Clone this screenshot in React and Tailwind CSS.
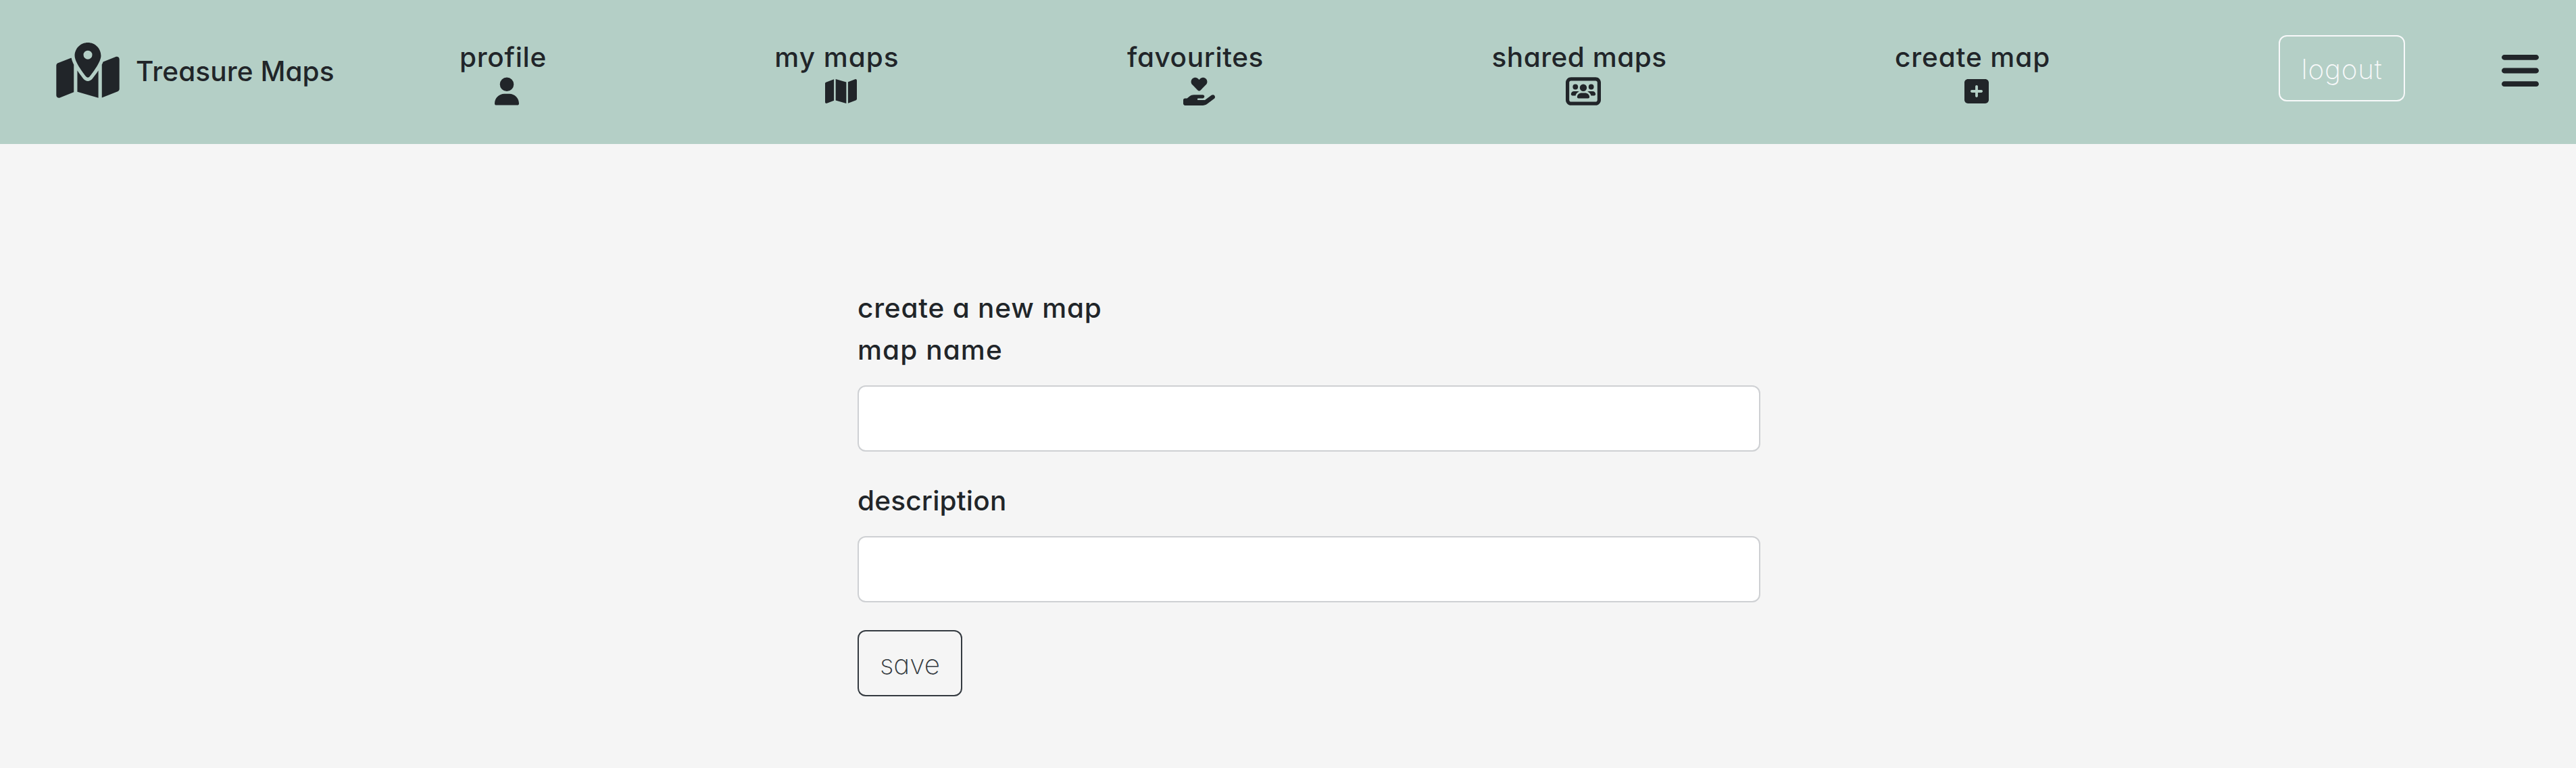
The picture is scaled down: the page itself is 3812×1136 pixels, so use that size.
import {
  FaMapLocationDot,
  FaUser,
  FaMap,
  FaHandHoldingHeart,
  FaUsersRectangle,
  FaSquarePlus,
  FaBars,
} from "react-icons/fa6";

const NAV = [
  { label: "profile", Icon: FaUser, size: "w-[127px] tracking-[0.7px]", icon: "w-[36px]" },
  { label: "my maps", Icon: FaMap, size: "w-[182px] tracking-[1px]", icon: "w-[47px]" },
  { label: "favourites", Icon: FaHandHoldingHeart, size: "w-[200px] tracking-[0.6px]", icon: "w-[47px]" },
  { label: "shared maps", Icon: FaUsersRectangle, size: "w-[257px] tracking-[0.5px]", icon: "w-[52px]" },
  { label: "create map", Icon: FaSquarePlus, size: "w-[228px] tracking-[0.9px]", icon: "w-[36px]" },
];

function Field({ label, id, className, labelClass }) {
  return (
    <div className={className}>
      <label htmlFor={id} className={`block h-[62px] ${labelClass}`}>
        {label}
      </label>
      <input
        id={id}
        className="mt-[21px] block h-[98px] w-full rounded-[12px] border-2 border-[#ced0d3] bg-white px-6 outline-none"
      />
    </div>
  );
}

export default function App() {
  return (
    <div className="min-h-[1136px] w-[3812px] bg-[#f5f5f5] font-['Inter',sans-serif] text-[40.5px] leading-[62px] font-medium text-[#212529] [font-feature-settings:'cv11']">
      <header className="flex h-[213px] items-start bg-[#b4cfc6] pl-[83px]">
        <a className="flex w-[598px] items-start pt-[62px]">
          <FaMapLocationDot className="mt-px h-[83px] w-[94px]" />
          <span className="ml-[24px] pt-[13px] tracking-[0.1px] whitespace-nowrap">Treasure Maps</span>
        </a>
        <nav className="flex gap-[339.5px] pt-[54px]">
          {NAV.map(({ label, Icon, size, icon }) => (
            <a key={label} className={`flex flex-col items-center whitespace-nowrap ${size}`}>
              <span className="h-[60px]">{label}</span>
              <Icon className={`ml-[11px] h-[42px] ${icon}`} />
            </a>
          ))}
        </nav>
        <button className="mt-[52px] ml-[339px] h-[98px] w-[187px] rounded-[12px] border-2 border-[#f8f9fa] pt-[3px] font-[250] tracking-[0.8px] text-[#f8f9fa]">
          logout
        </button>
        <FaBars className="mt-[73px] ml-[143px] h-[63px] w-[55px]" />
      </header>

      <main className="ml-[1269px] w-[1336px] pt-[212px]">
        <h1 className="h-[62px] tracking-[0.8px]">create a new map</h1>
        <Field label="map name" id="map-name" labelClass="tracking-[1.1px]" />
        <Field label="description" id="description" className="mt-[42px]" labelClass="tracking-[0.2px]" />
        <button className="mt-[41px] block h-[98px] w-[155px] rounded-[12px] border-2 border-[#343a40] pt-[3px] font-[250] tracking-[0px] text-[#343a40]">
          save
        </button>
      </main>
    </div>
  );
}
